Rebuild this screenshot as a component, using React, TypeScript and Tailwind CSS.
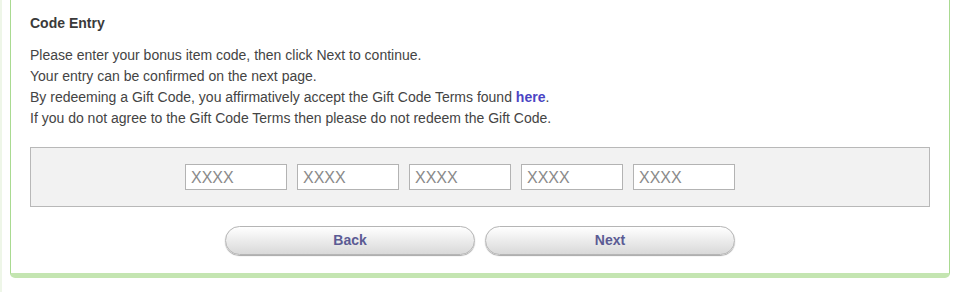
import React from "react";

export default function App() {
  const inputs = [0, 1, 2, 3, 4];
  return (
    <div className="w-[959px] h-[292px] bg-white border-l-2 border-[#eef6e8] font-['Liberation_Sans',Arial,sans-serif] text-[#444]">
      <div className="ml-[8px] w-[940px] h-[278px] border-x border-b-[5px] border-x-[#a9da91] border-b-[#c4e5b1] rounded-b-[5px] pl-[19px] pr-[19px] pt-[14px]">
        <div className="text-[14px] font-bold leading-[18px] text-[#3a3a3a]">Code Entry</div>
        <div className="mt-[13px] text-[14px] leading-[21px] text-[#444]">
          <div>Please enter your bonus item code, then click Next to continue.</div>
          <div>Your entry can be confirmed on the next page.</div>
          <div>
            By redeeming a Gift Code, you affirmatively accept the Gift Code Terms found{" "}
            <a className="font-bold text-[#4b44c4]">here</a>.
          </div>
          <div>If you do not agree to the Gift Code Terms then please do not redeem the Gift Code.</div>
        </div>
        <div className="mt-[18px] h-[60px] border border-[#b8b8b8] bg-[#f2f2f2] flex items-center gap-[10px] pl-[154px]">
          {inputs.map((i) => (
            <input
              key={i}
              placeholder="XXXX"
              className="w-[102px] h-[26px] border border-[#b3b3b3] bg-white px-[5px] pt-[2px] text-[16px] text-[#333] placeholder:text-[#8a8a8a] outline-none"
            />
          ))}
        </div>
        <div className="mt-[19px] flex justify-center gap-[10px]">
          <button className="w-[250px] h-[29px] rounded-full border border-[#b5b5b5] bg-gradient-to-b from-[#ffffff] to-[#d9d9d9] shadow-[0_1px_1px_rgba(0,0,0,0.35)] text-[14px] font-bold text-[#5b5b94]">
            Back
          </button>
          <button className="w-[250px] h-[29px] rounded-full border border-[#b5b5b5] bg-gradient-to-b from-[#ffffff] to-[#d9d9d9] shadow-[0_1px_1px_rgba(0,0,0,0.35)] text-[14px] font-bold text-[#5b5b94]">
            Next
          </button>
        </div>
      </div>
    </div>
  );
}
